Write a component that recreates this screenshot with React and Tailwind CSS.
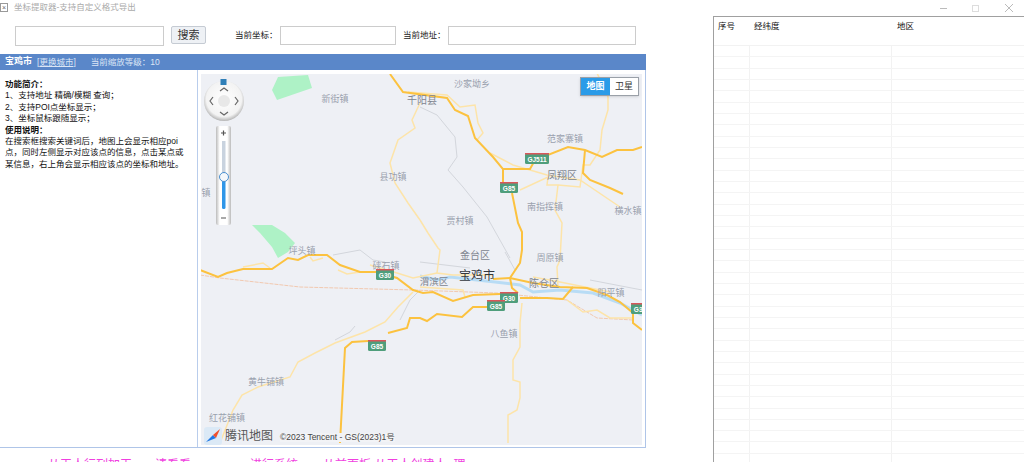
import React from 'react';

const cjk = { fontFamily: '"Liberation Sans", "Noto Sans CJK SC", sans-serif' };

// map lines, in page coordinates (the svg viewBox starts at the map's corner)
const mainRoads = [
    'M390 74 L403 92 L447 98 L455 110 L468 116 L475 138 L493 157 L503 169 L503 182 M512 193 L518 223 L522 232 L522 250 L520 263 L510 278 L512 288 L518 293',
    'M503 169 L530 169 L535 160 L568 147 L585 150 L602 157 L617 150 L633 150 L642 147',
    'M585 150 L583 173 L590 180 L610 188 L623 194',
    'M200 270 L218 277 L227 273 L243 269 L272 269 L288 258 L298 260 L308 255 L327 255 L340 265 L360 272 L377 272 L397 278 L413 290 L423 293 L433 292 L453 301 L473 295 L500 294',
    'M493 279 L510 278 L533 283 L560 287 L587 288 L607 295 L620 302 L633 313 L633 323 L642 330',
    'M520 298 L547 298 L563 299 L573 287',
    'M340 443 L345 348 L352 342 L368 341 M388 333 L407 328 L410 318 L420 318 L427 321 L437 314 L462 317 L473 307 L487 307',
    'M642 307 L634 312',
];

const lightRoads = [
    'M597 73 L608 97 L608 110 L602 130 L600 150 L590 165 L583 165 L580 187 L558 185 L547 185 L548 177 L520 190',
    'M490 153 L513 165 L547 175 L580 180 L620 207',
    'M558 185 L555 210 L562 223 L560 260 L557 267 L558 287',
    'M420 220 L428 233 L438 248 L440 250 L437 273 L453 275 L493 275',
    'M420 103 L412 120 L415 128 L398 140 L390 163 L395 183 L408 203 L420 220',
    'M408 92 L447 95 L460 107 L475 105 L478 123 L483 133 L477 140',
    'M220 443 L233 410 L242 395 L258 387 L290 377 L298 362 L315 353 L335 343 L365 332 L385 322 L398 307 L413 292',
    'M522 303 L520 323 L520 347 L513 360 L513 380 L520 382 L520 398 L517 410 L508 415 L508 443',
    'M243 267 L263 263 L270 268 M310 257 L313 261 L323 258',
    'M338 270 L347 274 L360 272 M370 265 L397 273 L413 278 L437 273',
    'M420 287 L463 290 L465 297 M533 277 L560 282 L610 292',
    'M567 300 L583 312 L597 310 L610 318 L633 318',
];

const railRoads = [
    'M420 107 L437 115 L455 137 L457 157 L448 170 L463 187 L487 217 L510 258',
    'M333 255 L360 250 L373 260 L385 262 M400 320 L410 300 L420 290 M335 340 L350 332 L355 326',
    'M505 252 L515 270 M420 262 L470 268 M590 280 L642 290',
];

const labels = [
    ['新街镇', 335, 102, 9, '#9aa1ae'],
    ['千阳县', 422, 104, 10, '#80858f'],
    ['沙家坳乡', 472, 87, 9, '#9aa1ae'],
    ['范家寨镇', 565, 142, 9, '#9aa1ae'],
    ['凤翔区', 562, 179, 10, '#80858f'],
    ['南指挥镇', 545, 210, 9, '#9aa1ae'],
    ['横水镇', 628, 214, 9, '#9aa1ae'],
    ['县功镇', 393, 180, 9, '#9aa1ae'],
    ['贾村镇', 460, 224, 9, '#9aa1ae'],
    ['金台区', 475, 259, 10, '#80858f'],
    ['周原镇', 550, 261, 9, '#9aa1ae'],
    ['坪头镇', 302, 254, 9, '#9aa1ae'],
    ['硖石镇', 386, 269, 9, '#9aa1ae'],
    ['渭滨区', 434, 285, 9.5, '#80858f'],
    ['宝鸡市', 477, 280, 12, '#33373d'],
    ['陈仓区', 544, 287, 10, '#80858f'],
    ['阳平镇', 611, 296, 9, '#9aa1ae'],
    ['八鱼镇', 504, 337, 9, '#9aa1ae'],
    ['黄牛铺镇', 266, 385, 9, '#9aa1ae'],
    ['红花铺镇', 227, 421, 9, '#9aa1ae'],
    ['镇', 206, 196, 9, '#9aa1ae'],
];

const shields = [
    ['GJ511', 525, 153, 24],
    ['G85', 500, 182, 18],
    ['G30', 376, 269, 18],
    ['G30', 500, 292, 18],
    ['G85', 487, 300, 18],
    ['G85', 368, 340, 18],
    ['G30', 631, 303, 18],
];

const MapCanvas = () => (
    <svg viewBox="201 74 441 371" className="absolute inset-0 w-full h-full" style={cjk}>
        <rect x="201" y="74" width="441" height="371" fill="#eef0f5" />
        <path d="M272 90 L278 77 L308 75 L312 88 L277 100 Z" fill="#aef2c6" />
        <path d="M252 225 L272 225 L285 233 L295 243 L288 252 L278 258 L272 247 L260 233 Z" fill="#aef2c6" />
        <path d="M420 276 L437 280 L450 277 L495 282 L520 285 L533 292 L560 290 L593 293 L620 303 L642 315" fill="none" stroke="#b8dcf5" strokeWidth="3" />
        <path d="M200 275 L220 278 L300 287 L413 290 L497 293 L567 300 L597 318 L633 320" fill="none" stroke="#f2c9b0" strokeWidth="1" strokeDasharray="4 1" />
        {railRoads.map((d, i) => (
            <path key={i} d={d} fill="none" stroke="#d3d6dc" strokeWidth="1" />
        ))}
        {lightRoads.map((d, i) => (
            <path key={i} d={d} fill="none" stroke="#fde4a9" strokeWidth="1.5" />
        ))}
        {mainRoads.map((d, i) => (
            <path key={i} d={d} fill="none" stroke="#fcc23f" strokeWidth="2" />
        ))}
        {labels.map(([text, x, y, size, color]) => (
            <text key={text} x={x} y={y} fontSize={size} fill={color} textAnchor="middle">
                {text}
            </text>
        ))}
        {shields.map(([text, x, y, w], i) => (
            <g key={i}>
                <rect x={x} y={y} width={w} height="11" rx="1.5" fill="#4f9e7c" />
                <rect x={x} y={y} width={w} height="1.5" fill="#d9565a" />
                <text x={x + w / 2} y={y + 8.5} fontSize="6.5" fontWeight="bold" fill="#fff" textAnchor="middle">{text}</text>
            </g>
        ))}
    </svg>
);

const NavControls = () => (
    <svg width="46" height="160" viewBox="0 0 46 160" className="absolute left-0 top-[3px]">
        <defs>
            <radialGradient id="disc" cx="50%" cy="45%" r="55%">
                <stop offset="0%" stopColor="#ffffff" />
                <stop offset="80%" stopColor="#f3f3f3" />
                <stop offset="100%" stopColor="#b5b5b5" />
            </radialGradient>
            <linearGradient id="slide" x1="0" x2="1" y1="0" y2="0">
                <stop offset="0%" stopColor="#bbb" />
                <stop offset="25%" stopColor="#fff" />
                <stop offset="75%" stopColor="#fff" />
                <stop offset="100%" stopColor="#bbb" />
            </linearGradient>
        </defs>
        <circle cx="23" cy="24" r="20" fill="url(#disc)" />
        <circle cx="23" cy="24" r="6" fill="#e8e8e8" />
        <rect x="19.5" y="2" width="6" height="6" fill="#2f7fb8" />
        <g fill="none" stroke="#666" strokeWidth="1.2">
            <path d="M19 14 L23 11 L27 14" />
            <path d="M19 35 L23 38 L27 35" />
            <path d="M12 20 L9 24 L12 28" />
            <path d="M34 20 L37 24 L34 28" />
        </g>
        <rect x="15" y="49" width="15" height="99" rx="2" fill="url(#slide)" />
        <path d="M20 56 H25 M22.5 53.5 V58.5 M20 141 H25" stroke="#555" strokeWidth="1.2" />
        <rect x="21" y="64" width="3.5" height="36" fill="#c9d3df" />
        <rect x="21" y="100" width="3.5" height="32" rx="1.5" fill="#2f96e8" />
        <circle cx="23" cy="100" r="4.5" fill="#f4f7fb" stroke="#4a8fd0" />
    </svg>
);

const MapLogo = () => (
    <div className="absolute left-[3px] bottom-0 flex items-center h-[18px]">
        <svg width="18" height="18" viewBox="0 0 18 18">
            <rect width="18" height="18" rx="3" fill="#dbe9f6" />
            <path d="M2 15 L9 8 L12 11 Z" fill="#1f78e6" />
            <path d="M16 2 L9 8 L12 11 Z" fill="#f0502d" />
        </svg>
        <span className="ml-[3px] text-[12px] leading-none text-[#555]">腾讯地图</span>
        <span className="ml-[7px] mt-[3px] text-[8.5px] leading-none text-[#444] whitespace-nowrap bg-[#f2f3f6]">©2023 Tencent - GS(2023)1号</span>
    </div>
);

const MapView = () => (
    <div className="relative flex-1 overflow-hidden">
        <MapCanvas />
        <NavControls />
        <div className="absolute right-[3px] top-[3px] flex h-[19px] border border-[#9aa0a8] shadow-sm text-[9px] leading-[17px] text-center">
            <div className="w-[29px] bg-[#2a9be8] text-white font-bold">地图</div>
            <div className="w-[28px] bg-white text-[#333]">卫星</div>
        </div>
        <MapLogo />
    </div>
);

const App = () => {
    const rows = Array.from({ length: 37 });

    return (
        <div className="w-[1024px] h-[462px] overflow-hidden bg-white flex flex-col" style={cjk}>
            <div className="flex h-[16px] shrink-0">
                <div className="w-[8px] h-[9px] mt-[3px] border border-[#999] text-[7px] leading-[7px] text-center text-[#666]">×</div>
                <div className="ml-[6px] text-[8.5px] leading-[15px] text-[#aaa] whitespace-nowrap">坐标提取器-支持自定义格式导出</div>
                <div className="ml-auto flex items-center text-[#bbb]">
                    <div className="w-[7px] h-px bg-[#bbb] mr-[25px]"></div>
                    <div className="w-[7px] h-[7px] border border-[#ddd] mr-[26px]"></div>
                    <svg width="8" height="8" viewBox="0 0 8 8" className="mr-[11px]">
                        <path d="M0 0 L8 8 M8 0 L0 8" stroke="#aaa" strokeWidth="0.8" />
                    </svg>
                </div>
            </div>

            <div className="flex flex-1 min-h-0">
                <div className="w-[646px] shrink-0 flex flex-col">
                    <div className="flex items-start h-[38px] pt-[10px] shrink-0 text-[8.5px] text-[#222]">
                        <input className="ml-[15px] w-[149px] h-[20px] border border-[#ccc] bg-white" />
                        <button className="ml-[7px] w-[35px] h-[18px] border border-[#c5cbd3] rounded-[2px] bg-[#eef1f5] text-[11px] leading-none text-[#333]">搜索</button>
                        <span className="ml-[29px] w-[45px] leading-[19px]">当前坐标：</span>
                        <input className="w-[116px] h-[19px] border border-[#ccc] bg-white" />
                        <span className="ml-[7px] w-[45px] leading-[19px]">当前地址：</span>
                        <input className="w-[188px] h-[19px] border border-[#ccc] bg-white" />
                    </div>

                    <div className="flex items-center h-[16px] shrink-0 pl-[5px] bg-[#5a87c9] text-[8.5px] text-[#dbe5f5]">
                        <span className="text-[9px] font-bold text-white">宝鸡市</span>
                        <span className="ml-[5px]">[<span className="underline">更换城市</span>]</span>
                        <span className="ml-[15px] whitespace-nowrap">当前缩放等级：10</span>
                    </div>

                    <div className="flex h-[378px] shrink-0 border-r border-b border-[#afc5e8]">
                        <div className="w-[198px] shrink-0 border-r border-[#b9cdec] pt-[9px] pl-[5px] pr-[11px] text-[8.5px] leading-[11.4px] text-[#111]">
                            <div className="font-bold">功能简介：</div>
                            <div>1、支持地址 精确/模糊 查询；</div>
                            <div>2、支持POI点坐标显示；</div>
                            <div>3、坐标鼠标跟随显示；</div>
                            <div className="font-bold">使用说明：</div>
                            <div>在搜索框搜索关键词后，地图上会显示相应poi点，同时左侧显示对应该点的信息，点击某点或某信息，右上角会显示相应该点的坐标和地址。</div>
                        </div>
                        <div className="flex flex-1 pt-[4px] pb-[2px] pl-[3px] pr-[3px]">
                            <MapView />
                        </div>
                    </div>

                    <div className="pl-[48px] pt-[11px] text-[12px] leading-none text-[#f040e0] whitespace-nowrap">
                        <span>从工人行列加工</span>
                        <span className="ml-[23px]">请看看</span>
                        <span className="ml-[59px]">进行系统</span>
                        <span className="ml-[25px]">从前面板 从工人创建人</span>
                        <span className="ml-[7px]">理</span>
                    </div>
                </div>

                <div className="ml-[67px] flex-1 border-t border-l border-[#a0a0a0] text-[#111]">
                    <div className="flex h-[29px] border-b border-[#f2f2f2] text-[8.5px] leading-[19px]">
                        <div className="w-[36px] pl-[4px]">序号</div>
                        <div className="w-[142px] pl-[4px]">经纬度</div>
                        <div className="pl-[5px]">地区</div>
                    </div>
                    {rows.map((_, i) => (
                        <div key={i} className="flex h-[11.33px] border-b border-[#f4f4f4]">
                            <div className="w-[36px] border-r border-[#f2f2f2]"></div>
                            <div className="w-[142px] border-r border-[#f2f2f2]"></div>
                        </div>
                    ))}
                </div>
            </div>
        </div>
    );
};

export default App;
